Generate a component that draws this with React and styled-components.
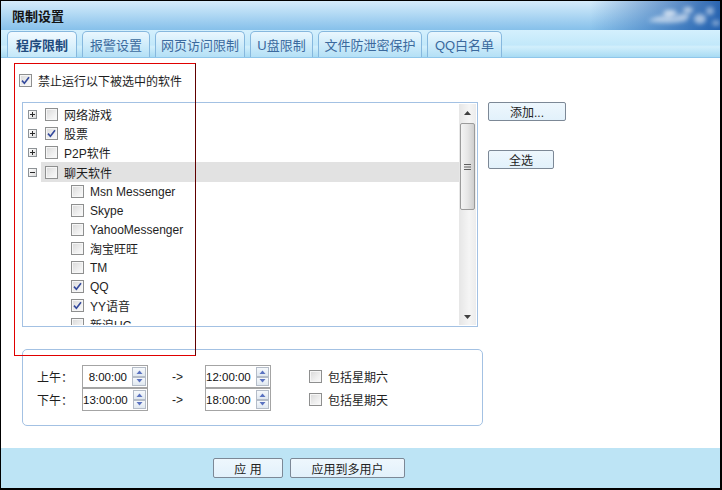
import React from "react";
import styled, { createGlobalStyle, css } from "styled-components";

const GlobalStyle = createGlobalStyle`
  html, body {
    margin: 0;
    padding: 0;
    background: #fff;
  }
  body {
    font-family: "Liberation Sans", "Noto Sans CJK SC", sans-serif;
    font-size: 12px;
    color: #1e1e1e;
  }
`;

const cjk = `"Liberation Sans", "Noto Sans CJK SC", sans-serif`;

const Window = styled.div`
  box-sizing: border-box;
  width: 722px;
  height: 490px;
  border-left: 1px solid #000;
  border-top: 1px solid #000;
  border-right: 2px solid #000;
  border-bottom: 2px solid #000;
  display: flex;
  flex-direction: column;
  overflow: hidden;
`;

const TitleBar = styled.div`
  position: relative;
  height: 29px;
  flex: none;
  display: flex;
  align-items: center;
  padding-left: 11px;
  background:
    linear-gradient(to right, rgba(30, 100, 180, 0) 82%, rgba(24, 86, 168, 0.9) 100%),
    linear-gradient(to bottom, #d6ecfb 0%, #b2d9f4 45%, #86c0ea 100%);
  overflow: hidden;
`;

const Title = styled.span`
  font-family: ${cjk};
  font-weight: bold;
  font-size: 13px;
  color: #141414;
`;

const Clouds = styled.svg`
  position: absolute;
  right: 0;
  top: 0;
`;

const TabBar = styled.div`
  height: 27px;
  flex: none;
  display: flex;
  align-items: flex-end;
  gap: 5px;
  padding-left: 6px;
  background: linear-gradient(to bottom, #d4f0fd 0%, #c2e8fa 55%, #d2effc 62%, #a8dbf3 100%);
  border-bottom: 1px solid #8fc6ea;
`;

const Tab = styled.div`
  box-sizing: border-box;
  width: ${(p) => p.$w}px;
  height: 26px;
  display: flex;
  align-items: center;
  justify-content: center;
  border: 1px solid #86b8de;
  border-bottom: none;
  border-radius: 5px 5px 0 0;
  font-family: ${cjk};
  font-size: 13px;
  color: #3b6a9e;
  background: linear-gradient(to bottom, #eaf7fe 0%, #cdebfa 55%, #b4e0f6 100%);
  ${(p) =>
    p.$active &&
    css`
      font-weight: bold;
      color: #1f4b7e;
      background: linear-gradient(to bottom, #f2faff 0%, #dbf1fc 55%, #c4e8f9 100%);
    `}
`;

const Content = styled.div`
  position: relative;
  flex: 1;
  background: #fff;
  padding: 15px 0 0 18px;
`;

const Annotation = styled.div`
  position: absolute;
  left: 13px;
  top: 5px;
  width: 182px;
  height: 293px;
  box-sizing: border-box;
  border: 1px solid #e00000;
  border-right-color: #600000;
  pointer-events: none;
`;

const CheckRow = styled.label`
  display: flex;
  align-items: center;
  gap: 6px;
  height: 15px;
  font-family: ${cjk};
  font-size: 12px;
`;

const Box = styled.span`
  box-sizing: border-box;
  width: 13px;
  height: 13px;
  flex: none;
  border: 1px solid #8e8f8f;
  background: linear-gradient(135deg, #d8d8d8 0%, #efefef 60%, #fbfbfb 100%);
  box-shadow: inset 0 0 0 1px #f6f6f6;
  display: flex;
  align-items: center;
  justify-content: center;
`;

const Check = ({ checked }) => (
  <Box>
    {checked && (
      <svg width="9" height="9" viewBox="0 0 9 9">
        <path d="M1 4.6 L3.4 7.2 L8 1.2" fill="none" stroke="#33499c" strokeWidth="1.6" />
      </svg>
    )}
  </Box>
);

const Main = styled.div`
  display: flex;
  align-items: flex-start;
  margin: 14px 0 0 3px;
`;

const TreeBox = styled.div`
  box-sizing: border-box;
  width: 456px;
  height: 225px;
  border: 1px solid #a3c1e3;
  display: flex;
  padding: 1px 1px 1px 0;
  overflow: hidden;
`;

const TreeList = styled.div`
  flex: 1;
  overflow: hidden;
  padding-top: 1px;
`;

const TreeRow = styled.div`
  height: ${(p) => (p.$tall ? 20 : 19)}px;
  display: flex;
  align-items: center;
  padding-left: ${(p) => p.$indent}px;
  font-family: ${cjk};
  font-size: 12px;
`;

const Expander = styled.span`
  box-sizing: border-box;
  width: 9px;
  height: 9px;
  flex: none;
  border: 1px solid #8d9296;
  background: linear-gradient(135deg, #ffffff, #dcdcdc);
  display: flex;
  align-items: center;
  justify-content: center;
`;

const NodeLabel = styled.span`
  flex: 1;
  align-self: stretch;
  margin-left: 4px;
  padding-left: 4px;
  display: flex;
  align-items: center;
  gap: 6px;
  background: ${(p) => (p.$selected ? "#e2e2e2" : "transparent")};
`;

const ChildLabel = styled.span`
  display: flex;
  align-items: center;
  gap: 6px;
`;

const ScrollBar = styled.div`
  width: 17px;
  flex: none;
  display: flex;
  flex-direction: column;
  background: linear-gradient(to right, #e6e6e6, #f5f5f5 60%, #ececec);
`;

const ScrollArrow = styled.div`
  height: 17px;
  display: flex;
  align-items: center;
  justify-content: center;
`;

const ScrollTrack = styled.div`
  flex: 1;
  padding-top: 2px;
`;

const Thumb = styled.div`
  box-sizing: border-box;
  height: 87px;
  margin: 0 1px;
  border: 1px solid #9b9b9b;
  border-radius: 2px;
  background: linear-gradient(to right, #f4f4f4, #e6e6e6 50%, #cfcfcf);
  display: flex;
  align-items: center;
  justify-content: center;
`;

const Side = styled.div`
  display: flex;
  flex-direction: column;
  align-items: flex-start;
  gap: 29px;
  margin-left: 10px;
`;

const Button = styled.button`
  box-sizing: border-box;
  width: ${(p) => p.$w}px;
  height: ${(p) => p.$h || 19}px;
  padding: 0;
  border: 1px solid #7c8896;
  border-radius: 2px;
  background: linear-gradient(to bottom, #eef7fd, #e2f1fb);
  font-family: ${cjk};
  font-size: 12px;
  color: #222;
  cursor: default;
`;

const TimeGroup = styled.div`
  box-sizing: border-box;
  width: 461px;
  height: 77px;
  margin: 22px 0 0 3px;
  border: 1px solid #a3c1e3;
  border-radius: 5px;
  padding: 15px 0 0 14px;
  display: grid;
  grid-template-columns: 45px 66px 57px 66px 38px auto;
  grid-template-rows: 23px 23px;
  align-items: center;
  font-family: ${cjk};
  font-size: 12px;
`;

const Arrow = styled.span`
  padding-left: 24px;
  font-family: "Liberation Sans", sans-serif;
`;

const Spin = styled.div`
  box-sizing: border-box;
  height: 23px;
  border: 1px solid #a4a4a4;
  display: flex;
  align-items: center;
  justify-content: flex-end;
  padding-right: 1px;
  background: #fff;
`;

const SpinValue = styled.span`
  font-family: "Liberation Sans", sans-serif;
  font-size: 11.5px;
  color: #111;
  padding-right: 5px;
`;

const SpinButtons = styled.div`
  width: 14px;
  height: 19px;
  display: flex;
  flex-direction: column;
`;

const SpinHalf = styled.div`
  box-sizing: border-box;
  flex: 1;
  border: 1px solid #b4bcc8;
  background: linear-gradient(to bottom, #f6f9fc, #e0e8f0);
  display: flex;
  align-items: center;
  justify-content: center;
`;

const SpinBox = ({ value }) => (
  <Spin>
    <SpinValue>{value}</SpinValue>
    <SpinButtons>
      <SpinHalf>
        <svg width="7" height="4" viewBox="0 0 7 4">
          <path d="M0.5 4 L3.5 0.5 L6.5 4 Z" fill="#5a72c0" />
        </svg>
      </SpinHalf>
      <SpinHalf>
        <svg width="7" height="4" viewBox="0 0 7 4">
          <path d="M0.5 0 L3.5 3.5 L6.5 0 Z" fill="#5a72c0" />
        </svg>
      </SpinHalf>
    </SpinButtons>
  </Spin>
);

const Footer = styled.div`
  height: 40px;
  flex: none;
  background: #bde4f5;
  display: flex;
  align-items: center;
  gap: 7px;
  padding-left: 212px;
`;

const tabs = [
  ["程序限制", 70],
  ["报警设置", 68],
  ["网页访问限制", 90],
  ["U盘限制", 63],
  ["文件防泄密保护", 104],
  ["QQ白名单", 75],
];

const groups = [
  { name: "网络游戏", open: false },
  { name: "股票", open: false, checked: true },
  { name: "P2P软件", open: false },
  { name: "聊天软件", open: true, selected: true },
];

const chatApps = [
  ["Msn Messenger"],
  ["Skype"],
  ["YahooMessenger"],
  ["淘宝旺旺"],
  ["TM"],
  ["QQ", true],
  ["YY语音", true],
  ["新浪UC"],
];

const ExpandIcon = ({ open }) => (
  <Expander>
    <svg width="7" height="7" viewBox="0 0 7 7">
      <path d="M1 3.5 H6" stroke="#2a2a2a" strokeWidth="1" />
      {!open && <path d="M3.5 1 V6" stroke="#2a2a2a" strokeWidth="1" />}
    </svg>
  </Expander>
);

export default function App() {
  return (
    <>
      <GlobalStyle />
      <Window>
        <TitleBar>
          <Title>限制设置</Title>
          <Clouds width="90" height="29" viewBox="0 0 90 29">
            <defs>
              <filter id="blur" x="-50%" y="-50%" width="200%" height="200%">
                <feGaussianBlur stdDeviation="2.2" />
              </filter>
            </defs>
            <g filter="url(#blur)" fill="#ffffff">
              <path d="M18 20 Q30 12 44 16 Q52 10 60 14 L56 20 Q40 24 18 20 Z" opacity="0.55" />
              <ellipse cx="40" cy="12" rx="7" ry="3" opacity="0.7" />
              <ellipse cx="58" cy="9" rx="5" ry="3" opacity="0.6" />
              <ellipse cx="70" cy="18" rx="6" ry="5" opacity="0.55" />
              <ellipse cx="80" cy="10" rx="4" ry="4" opacity="0.45" />
              <ellipse cx="86" cy="22" rx="4" ry="3" opacity="0.4" />
            </g>
          </Clouds>
        </TitleBar>
        <TabBar>
          {tabs.map(([label, w], i) => (
            <Tab key={label} $w={w} $active={i === 0}>
              {label}
            </Tab>
          ))}
        </TabBar>
        <Content>
          <CheckRow>
            <Check checked />
            禁止运行以下被选中的软件
          </CheckRow>
          <Main>
            <TreeBox>
              <TreeList>
                {groups.map((g) => (
                  <React.Fragment key={g.name}>
                    <TreeRow $indent={5} $tall={g.selected}>
                      <ExpandIcon open={g.open} />
                      <NodeLabel $selected={g.selected}>
                        <Check checked={g.checked} />
                        {g.name}
                      </NodeLabel>
                    </TreeRow>
                    {g.open &&
                      chatApps.map(([name, checked]) => (
                        <TreeRow key={name} $indent={48}>
                          <ChildLabel>
                            <Check checked={checked} />
                            {name}
                          </ChildLabel>
                        </TreeRow>
                      ))}
                  </React.Fragment>
                ))}
              </TreeList>
              <ScrollBar>
                <ScrollArrow>
                  <svg width="7" height="4" viewBox="0 0 7 4">
                    <path d="M0 4 L3.5 0 L7 4 Z" fill="#404040" />
                  </svg>
                </ScrollArrow>
                <ScrollTrack>
                  <Thumb>
                    <svg width="7" height="6" viewBox="0 0 7 6">
                      <path d="M0 0.5 H7 M0 3 H7 M0 5.5 H7" stroke="#606060" strokeWidth="1" />
                    </svg>
                  </Thumb>
                </ScrollTrack>
                <ScrollArrow>
                  <svg width="7" height="4" viewBox="0 0 7 4">
                    <path d="M0 0 L3.5 4 L7 0 Z" fill="#404040" />
                  </svg>
                </ScrollArrow>
              </ScrollBar>
            </TreeBox>
            <Side>
              <Button $w={78}>添加...</Button>
              <Button $w={66}>全选</Button>
            </Side>
          </Main>
          <TimeGroup>
            <span>上午：</span>
            <SpinBox value="8:00:00" />
            <Arrow>-&gt;</Arrow>
            <SpinBox value="12:00:00" />
            <span />
            <CheckRow>
              <Check />
              包括星期六
            </CheckRow>
            <span>下午：</span>
            <SpinBox value="13:00:00" />
            <Arrow>-&gt;</Arrow>
            <SpinBox value="18:00:00" />
            <span />
            <CheckRow>
              <Check />
              包括星期天
            </CheckRow>
          </TimeGroup>
          <Annotation />
        </Content>
        <Footer>
          <Button $w={70} $h={20}>应 用</Button>
          <Button $w={115} $h={20}>应用到多用户</Button>
        </Footer>
      </Window>
    </>
  );
}
